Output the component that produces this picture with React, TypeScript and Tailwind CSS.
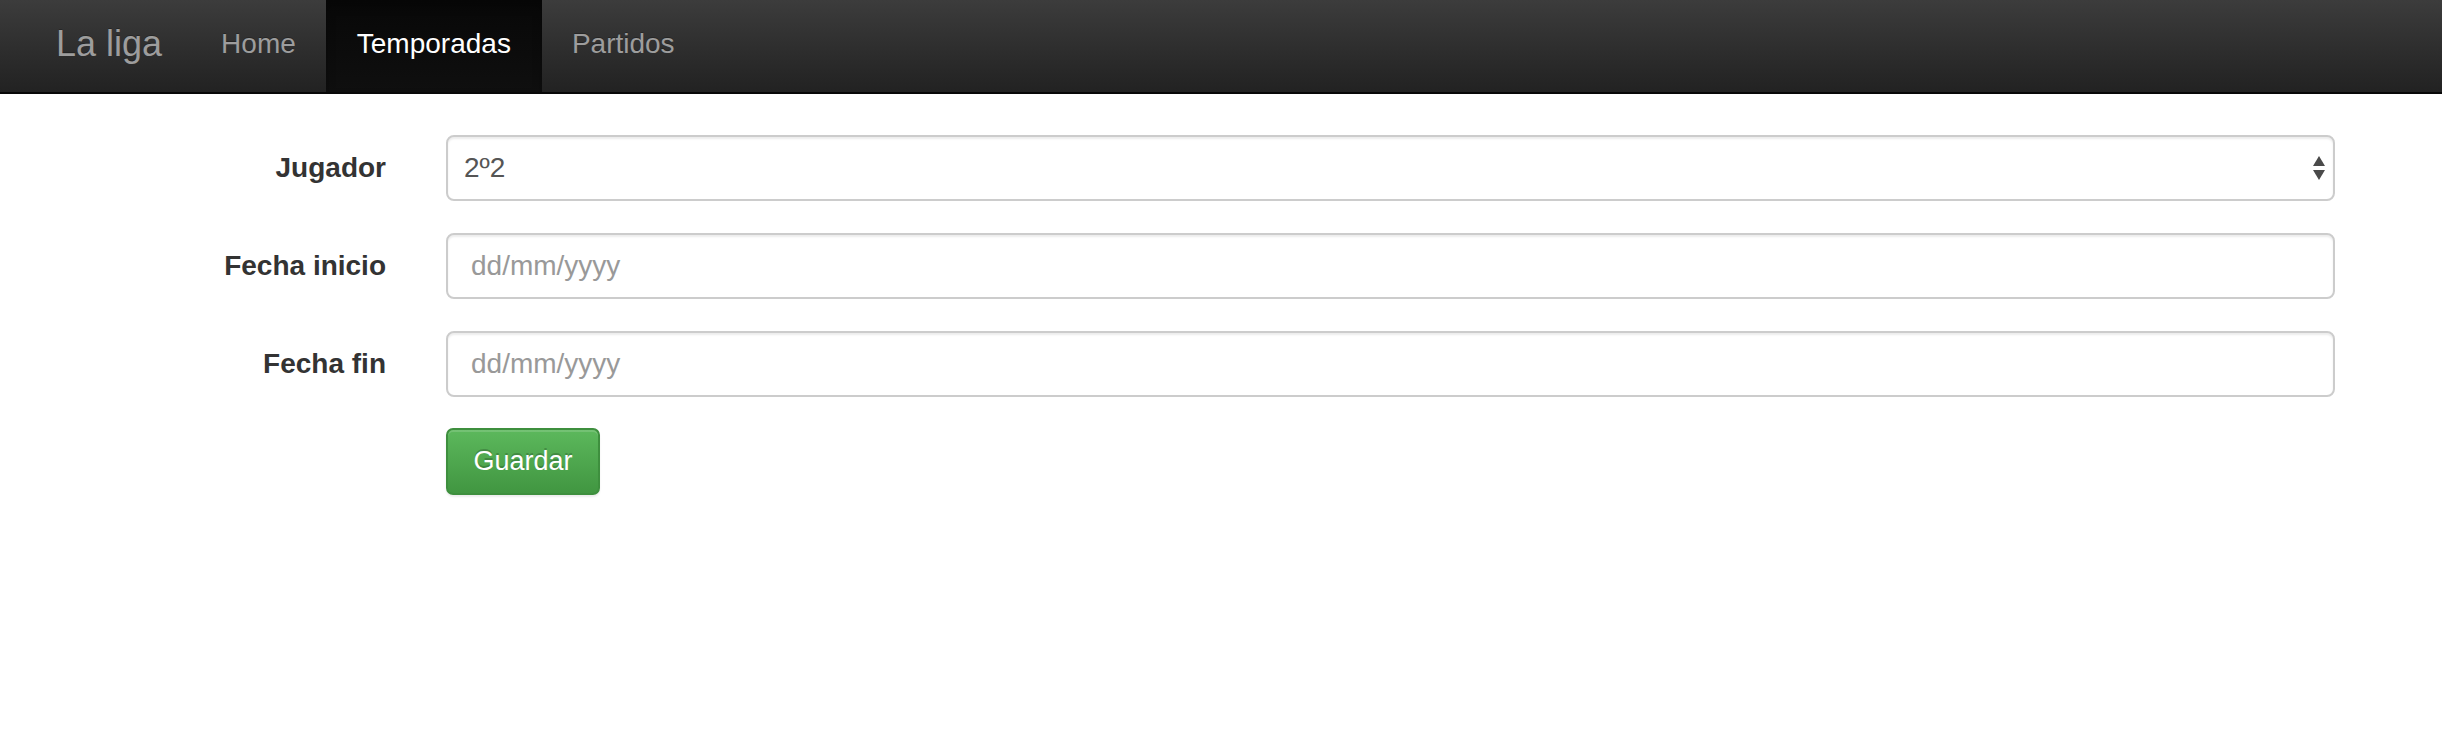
import React from "react";

export default function App() {
  const font = { fontFamily: '"Liberation Sans", Arial, sans-serif' };
  return (
    <div className="min-h-[732px] w-full bg-white" style={font}>
      <nav className="flex h-[94px] items-stretch border-b-2 border-[#080808] bg-gradient-to-b from-[#3c3c3c] to-[#222222] pl-[27px]">
        <a className="flex items-center px-[29px] pb-[4px] text-[36px] text-[#9d9d9d] [text-shadow:0_-1px_0_rgba(0,0,0,0.25)]">
          La liga
        </a>
        <a className="flex items-center px-[30px] pb-[4px] text-[28px] text-[#9d9d9d] [text-shadow:0_-1px_0_rgba(0,0,0,0.25)]">
          Home
        </a>
        <a className="flex items-center bg-gradient-to-b from-[#080808] to-[#0f0f0f] px-[31px] pb-[4px] text-[28px] text-white shadow-[inset_0_6px_10px_rgba(0,0,0,0.25)] [text-shadow:0_-1px_0_rgba(0,0,0,0.25)]">
          Temporadas
        </a>
        <a className="flex items-center px-[30px] pb-[4px] text-[28px] text-[#9d9d9d] [text-shadow:0_-1px_0_rgba(0,0,0,0.25)]">
          Partidos
        </a>
      </nav>

      <form className="flex flex-col gap-[32px] pr-[107px] pt-[41px]">
        <div className="flex items-center gap-[60px]">
          <label className="w-[386px] shrink-0 text-right text-[28px] font-bold text-[#333333]">
            Jugador
          </label>
          <div className="relative flex h-[66px] flex-1 items-center rounded-[8px] border-2 border-[#cccccc] bg-white pl-[16px] text-[28px] text-[#555555] shadow-[inset_0_2px_2px_rgba(0,0,0,0.075)]">
            2º2
            <svg
              className="absolute right-[7px] top-1/2 -translate-y-1/2"
              width="14"
              height="26"
              viewBox="0 0 14 26"
            >
              <polygon points="7,1 13,11 1,11" fill="#4a4a4a" />
              <polygon points="1,15 13,15 7,25" fill="#4a4a4a" />
            </svg>
          </div>
        </div>

        <div className="flex items-center gap-[60px]">
          <label className="w-[386px] shrink-0 text-right text-[28px] font-bold text-[#333333]">
            Fecha inicio
          </label>
          <div className="flex h-[66px] flex-1 items-center rounded-[8px] border-2 border-[#cccccc] bg-white pl-[23px] text-[28px] text-[#999999] shadow-[inset_0_2px_2px_rgba(0,0,0,0.075)]">
            dd/mm/yyyy
          </div>
        </div>

        <div className="flex items-center gap-[60px]">
          <label className="w-[386px] shrink-0 text-right text-[28px] font-bold text-[#333333]">
            Fecha fin
          </label>
          <div className="flex h-[66px] flex-1 items-center rounded-[8px] border-2 border-[#cccccc] bg-white pl-[23px] text-[28px] text-[#999999] shadow-[inset_0_2px_2px_rgba(0,0,0,0.075)]">
            dd/mm/yyyy
          </div>
        </div>

        <div className="-mt-[1px] flex items-center gap-[60px]">
          <div className="w-[386px] shrink-0" />
          <button
            type="button"
            className="flex h-[67px] w-[154px] items-center justify-center rounded-[7px] border-2 border-[#3e8f3e] bg-gradient-to-b from-[#5cb85c] to-[#419641] text-[27px] text-white shadow-[inset_0_2px_0_rgba(255,255,255,0.15),0_2px_2px_rgba(0,0,0,0.075)] [text-shadow:0_-2px_0_rgba(0,0,0,0.2)]"
          >
            Guardar
          </button>
        </div>
      </form>
    </div>
  );
}
